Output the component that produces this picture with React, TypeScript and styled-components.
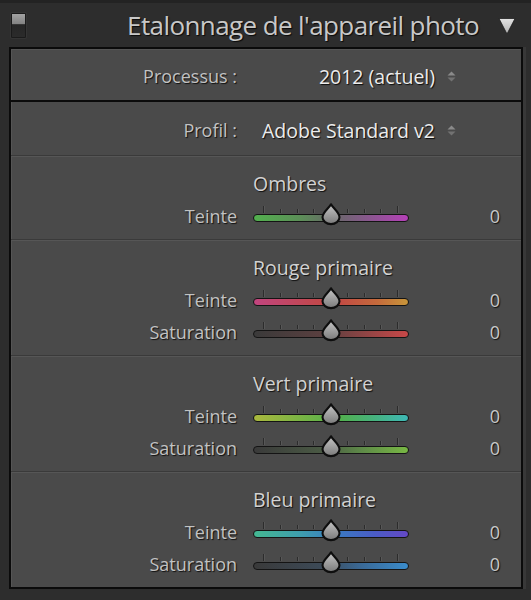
import React from 'react';
import styled, { createGlobalStyle } from 'styled-components';

const Global = createGlobalStyle`
  html, body { margin: 0; padding: 0; background: #2d2d2d; }
  body { width: 531px; height: 600px; overflow: hidden; font-family: "Open Sans", "Lato", sans-serif; }
  #root { width: 531px; height: 600px; }
`;

const Frame = styled.div`
  width: 531px;
  height: 600px;
  box-sizing: border-box;
  background: #2d2d2d;
  border-top: 3px solid #232323;
  display: flex;
  flex-direction: column;
`;

const Header = styled.div`
  height: 44px;
  display: flex;
  align-items: center;
  padding: 0 15px 0 11px;
`;

const Toggle = styled.div`
  width: 13px;
  height: 23px;
  border: 1px solid #1b1b1b;
  border-radius: 1px;
  background: linear-gradient(#a2a2a2 0%, #828282 44%, #262626 46%, #2b2b2b 100%);
  box-shadow: 0 0 0 1px #353535;
`;

const Title = styled.div`
  margin-left: auto;
  font-size: 26px;
  letter-spacing: -0.6px;
  color: #c8c8c8;
  text-shadow: 1px 1px 1px rgba(0, 0, 0, 0.8);
  line-height: 30px;
`;

const Disclosure = styled.svg`
  margin-left: 19px;
  width: 18px;
  height: 18px;
  margin-top: 2px;
`;

const Panel = styled.div`
  margin: 0 8px 0 9px;
  border: 2px solid #0b0b0b;
  background: #4a4a4a;
  box-shadow: inset 1px 1px 0 #555, 3px 0 0 #383838;
  display: flex;
  flex-direction: column;
`;

const PopupRow = styled.div<{ $divider?: boolean }>`
  height: 53px;
  display: grid;
  grid-template-columns: 226px 198px 21px;
  align-items: center;
  border-bottom: ${(p) => (p.$divider ? '2px solid #0b0b0b' : 'none')};
  padding-top: 3px;
  box-sizing: border-box;
`;

const Label = styled.div`
  text-align: right;
  font-size: 18px;
  color: #c2c2c2;
  text-shadow: 1px 1px 1px rgba(0, 0, 0, 0.8);
  white-space: nowrap;
`;

const PopupValue = styled.div`
  text-align: right;
  font-size: 19.5px;
  color: #ececec;
  text-shadow: 1px 1px 1px rgba(0, 0, 0, 0.85);
  white-space: nowrap;
`;

const Stepper = styled.svg`
  justify-self: end;
  width: 9px;
  height: 11px;
`;

const Section = styled.div`
  display: grid;
  grid-template-columns: 226px 156px 1fr;
  column-gap: 16px;
  border-top: 1px solid #3a3a3a;
  box-shadow: inset 0 1px 0 #565656;
  padding: 17px 0 7px;
`;

const SectionTitle = styled.div`
  grid-column: 2 / 4;
  height: 22px;
  line-height: 22px;
  margin-bottom: 5px;
  font-size: 19.5px;
  color: #d2d2d2;
  text-shadow: 1px 1px 1px rgba(0, 0, 0, 0.8);
`;

const SliderRow = styled.div`
  display: contents;
`;

const RowCell = styled.div`
  height: 32px;
  display: flex;
  align-items: center;
`;

const LabelCell = styled(RowCell)`
  justify-content: flex-end;
`;

const ValueCell = styled(RowCell)`
  justify-content: flex-end;
  padding-right: 21px;
  font-size: 18px;
  color: #c8c8c8;
  text-shadow: 1px 1px 1px rgba(0, 0, 0, 0.8);
`;

const Track = styled.div<{ $gradient: string }>`
  position: relative;
  width: 100%;
  height: 8px;
  box-sizing: border-box;
  border: 1.5px solid #141414;
  border-radius: 4px;
  background: ${(p) => p.$gradient};
  margin-top: 4px;
`;

const Ticks = styled.div`
  position: absolute;
  left: 9px;
  right: 10px;
  bottom: calc(100% + 2px);
  height: 7px;
  display: flex;
  justify-content: space-between;
  align-items: flex-end;
`;

const Tick = styled.span<{ $end?: boolean }>`
  width: 1px;
  height: ${(p) => (p.$end ? 7 : 4)}px;
  background: #2c2c2c;
  box-shadow: 1px 0 0 rgba(120, 120, 120, 0.3);
`;

const Thumb = styled.svg`
  position: absolute;
  left: 50%;
  top: -12px;
  width: 20px;
  height: 22px;
  transform: translateX(-50%);
  overflow: visible;
`;

type SliderDef = { label: string; gradient: string };
type SectionDef = { title: string; sliders: SliderDef[] };

const DARK = '#3a3a3a';

const sections: SectionDef[] = [
  {
    title: 'Ombres',
    sliders: [
      {
        label: 'Teinte',
        gradient: 'linear-gradient(90deg, #52b04e 0%, #5c8f58 30%, #666a66 50%, #85598a 72%, #b540b8 100%)',
      },
    ],
  },
  {
    title: 'Rouge primaire',
    sliders: [
      {
        label: 'Teinte',
        gradient: 'linear-gradient(90deg, #c2457f 0%, #c2484e 40%, #c24a44 55%, #c46a3c 80%, #c8963a 100%)',
      },
      {
        label: 'Saturation',
        gradient: `linear-gradient(90deg, ${DARK} 0%, #5a3f3f 45%, #8a4444 70%, #c84848 100%)`,
      },
    ],
  },
  {
    title: 'Vert primaire',
    sliders: [
      {
        label: 'Teinte',
        gradient: 'linear-gradient(90deg, #aab83e 0%, #7ab444 30%, #52b04c 55%, #46b27e 78%, #3eb8b6 100%)',
      },
      {
        label: 'Saturation',
        gradient: `linear-gradient(90deg, ${DARK} 0%, #4a5a44 45%, #5e8a48 70%, #78b844 100%)`,
      },
    ],
  },
  {
    title: 'Bleu primaire',
    sliders: [
      {
        label: 'Teinte',
        gradient: 'linear-gradient(90deg, #44b892 0%, #3e9eae 30%, #3a78c2 55%, #4a5cc6 78%, #6448c6 100%)',
      },
      {
        label: 'Saturation',
        gradient: `linear-gradient(90deg, ${DARK} 0%, #3c4a58 45%, #3a6a98 70%, #3a8ccc 100%)`,
      },
    ],
  },
];

const ThumbIcon: React.FC = () => (
  <Thumb viewBox="0 0 19 21">
    <defs>
      <linearGradient id="thumbFill" x1="0" y1="0" x2="0" y2="1">
        <stop offset="0" stopColor="#c6c6c6" />
        <stop offset="1" stopColor="#7a7a7a" />
      </linearGradient>
    </defs>
    <path
      d="M9.5 1.2 C11.5 5 17.6 9 17.6 13.6 A8.1 6.6 0 0 1 1.4 13.6 C1.4 9 7.5 5 9.5 1.2 Z"
      fill="url(#thumbFill)"
      stroke="#0e0e0e"
      strokeWidth="2"
      strokeLinejoin="round"
    />
  </Thumb>
);

const Slider: React.FC<{ gradient: string }> = ({ gradient }) => (
  <Track $gradient={gradient}>
    <Ticks>
      {Array.from({ length: 9 }).map((_, i) => (
        <Tick key={i} $end={i === 0 || i === 8} />
      ))}
    </Ticks>
    <ThumbIcon />
  </Track>
);

const StepperIcon: React.FC = () => (
  <Stepper viewBox="0 0 9 11">
    <polygon points="0.5,4.6 4.5,0.4 8.5,4.6" fill="#8a8a8a" />
    <polygon points="0.5,6.4 4.5,10.6 8.5,6.4" fill="#727272" />
  </Stepper>
);

export default function App() {
  return (
    <>
      <Global />
      <Frame>
        <Header>
          <Toggle />
          <Title>Etalonnage de l'appareil photo</Title>
          <Disclosure viewBox="0 0 18 18">
            <defs>
              <linearGradient id="triFill" x1="0" y1="0" x2="0" y2="1">
                <stop offset="0" stopColor="#e2e2e2" />
                <stop offset="1" stopColor="#b4b4b4" />
              </linearGradient>
            </defs>
            <polygon points="1,1.5 17,1.5 9,17" fill="url(#triFill)" stroke="#1e1e1e" strokeWidth="0.8" strokeLinejoin="round" />
          </Disclosure>
        </Header>
        <Panel>
          <PopupRow $divider>
            <Label>Processus :</Label>
            <PopupValue>2012 (actuel)</PopupValue>
            <StepperIcon />
          </PopupRow>
          <PopupRow>
            <Label>Profil :</Label>
            <PopupValue>Adobe Standard v2</PopupValue>
            <StepperIcon />
          </PopupRow>
          {sections.map((s) => (
            <Section key={s.title}>
              <SectionTitle>{s.title}</SectionTitle>
              {s.sliders.map((sl) => (
                <SliderRow key={sl.label}>
                  <LabelCell>
                    <Label>{sl.label}</Label>
                  </LabelCell>
                  <RowCell>
                    <Slider gradient={sl.gradient} />
                  </RowCell>
                  <ValueCell>0</ValueCell>
                </SliderRow>
              ))}
            </Section>
          ))}
        </Panel>
      </Frame>
    </>
  );
}
